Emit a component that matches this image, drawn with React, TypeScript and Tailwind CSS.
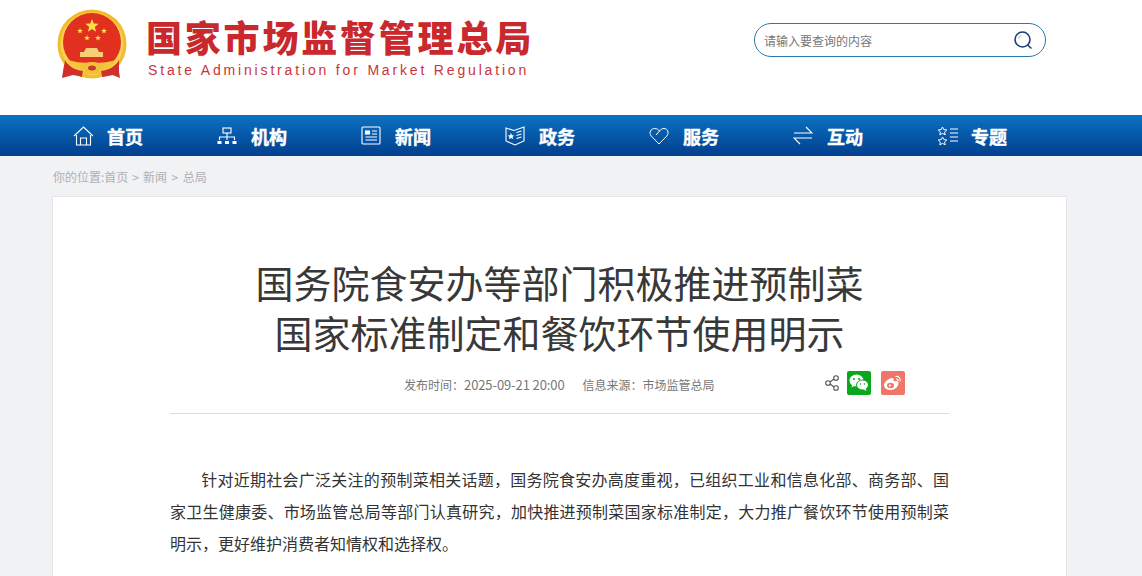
import React from "react";

const cjk = { fontFamily: '"Noto Sans CJK SC", "Liberation Sans", sans-serif' };

function Star({ x, y, r, fill = "#fde047" }: { x: number; y: number; r: number; fill?: string }) {
  const pts: string[] = [];
  for (let i = 0; i < 10; i++) {
    const a = -Math.PI / 2 + (i * Math.PI) / 5;
    const rr = i % 2 === 0 ? r : r * 0.42;
    pts.push(`${x + rr * Math.cos(a)},${y + rr * Math.sin(a)}`);
  }
  return <polygon points={pts.join(" ")} fill={fill} />;
}

function Emblem() {
  return (
    <svg width="72" height="76" viewBox="0 0 72 76" className="shrink-0">
      <path d="M8 50 L5 69 L16 66 L26 68 L36 62 L46 68 L56 66 L63 69 L60 50 L36 60Z" fill="#cf2c28" />
      <circle cx="35" cy="35" r="34.5" fill="#f2bd2c" />
      <circle cx="35" cy="35" r="31.5" fill="#f9d153" />
      <circle cx="35" cy="33" r="29" fill="#e1301f" />
      <Star x={35} y={17} r={7} />
      <Star x={23} y={22} r={3} />
      <Star x={47} y={22} r={3} />
      <Star x={30} y={29} r={3} />
      <Star x={41} y={29} r={3} />
      <path d="M29 39h11l2 4h4v5H23v-5h4z" fill="#f6cf77" />
      <path d="M10 50c5 3 15 4 25 4s20-1 25-4c-3 7-12 13-25 13S13 57 10 50z" fill="#f6c63a" />
      <path d="M8 51 L6 68 L17 65 L25 68 L26 62C18 61 11 57 8 51z" fill="#d1302a" />
      <path d="M62 51 L62 68 L53 65 L45 68 L44 62C52 61 59 57 62 51z" fill="#d1302a" />
      <path d="M22 59c4-5 9-6 13-6s9 1 13 6c-3 0-5 1-6 2l3 6c-3-1-7-2-10-2s-7 1-10 2l3-6c-1-1-3-2-6-2z" fill="#f3c03a" />
      <ellipse cx="35" cy="59" rx="4" ry="2.5" fill="#c83a28" />
    </svg>
  );
}

const stroke = { fill: "none", stroke: "#fff", strokeWidth: 1.1 };

const icons: React.ReactNode[] = [
  <svg key="h" width="21" height="20" viewBox="0 0 21 20" {...stroke}>
    <path d="M1 10 L10.500 1 L20 10" />
    <path d="M3.500 9v10h14V9" />
    <path d="M7.500 19v-7h6v7" />
  </svg>,
  <svg key="o" width="20" height="18" viewBox="0 0 20 18" {...stroke}>
    <rect x="6" y="1" width="8" height="5" />
    <path d="M10 6v4M2.500 13v-3h15v3M10 10v3" />
    <rect x="0.500" y="14" width="4" height="3" fill="#fff" stroke="none" />
    <rect x="8" y="14" width="4" height="3" fill="#fff" stroke="none" />
    <rect x="15.500" y="14" width="4" height="3" fill="#fff" stroke="none" />
  </svg>,
  <svg key="n" width="20" height="19" viewBox="0 0 20 19" {...stroke}>
    <rect x="1" y="1" width="18" height="17" rx="1" />
    <rect x="4.500" y="5" width="4" height="3" fill="#fff" />
    <path d="M11 5h5M11 8h5M4.500 11h11.500M4.500 14h11.500" />
  </svg>,
  <svg key="z" width="20" height="20" viewBox="0 0 20 20" {...stroke}>
    <path d="M1 2 L9 4.500 L19 1 V15 L10 19 L1 15Z" />
    <path d="M11.500 6.500l5-1.500M11.500 9.500l5-1.500M11.500 12.500l5-1.500" />
    <polygon points="6,7 7,9.300 9.300,9.500 7.500,11 8.100,13.300 6,12 3.900,13.300 4.500,11 2.700,9.500 5,9.300" fill="#fff" stroke="none" />
  </svg>,
  <svg key="f" width="20" height="18" viewBox="0 0 20 18" fill="none" stroke="#fff" strokeWidth="1">
    <path d="M10 17 L2.200 9 C-0.500 5.500 2 1.500 5.800 1.500 C8 1.500 9.500 2.500 10.500 4 L7 8" />
    <path d="M10.500 4 C11.500 2.500 13 1.500 15 1.500 C18.500 1.500 20.500 5.500 17.800 9 L10 17" />
  </svg>,
  <svg key="i" width="20" height="19" viewBox="0 0 20 19" {...stroke}>
    <path d="M1 7h18L13 1" />
    <path d="M19 12H1l6 6" />
  </svg>,
  <svg key="t" width="21" height="20" viewBox="0 0 21 20" fill="none" stroke="#fff" strokeWidth="1">
    <polygon points="5.500,1 6.800,3.600 9.800,4 7.600,6 8.200,8.800 5.500,7.400 2.800,8.800 3.400,6 1.200,4 4.200,3.600" />
    <polygon points="5.500,11 6.800,13.600 9.800,14 7.600,16 8.200,18.800 5.500,17.400 2.800,18.800 3.400,16 1.200,14 4.200,13.600" />
    <path d="M13 3h8M13 7h8M13 11h8M13 15h8" />
  </svg>,
];

const nav = ["首页", "机构", "新闻", "政务", "服务", "互动", "专题"];

export default function App() {
  return (
    <div className="h-[576px] w-[1142px] overflow-hidden bg-[#f1f2f4]" style={cjk}>
      <header className="flex h-[115px] items-start bg-white pl-[57px]">
        <div className="mt-[9px] flex w-[697px] items-start">
          <Emblem />
          <div className="ml-[18px] flex flex-col">
            <div className="mt-[3px] whitespace-nowrap text-[36px] font-black leading-[48px] tracking-[2.8px] text-[#c9282d] -ml-[1px]">
              国家市场监督管理总局
            </div>
            <div
              className="mt-[1px] whitespace-nowrap pl-[1px] text-[14px] leading-[18px] tracking-[2.83px] text-[#c9343a]"
              style={{ fontFamily: '"Liberation Sans", sans-serif' }}
            >
              State Administration for Market Regulation
            </div>
          </div>
        </div>
        <div className="mt-[23px] flex h-[34px] w-[292px] items-center justify-between rounded-[17px] border border-[#2b7ba6] pl-[10px] pr-[12px]">
          <span className="-ml-[1px] mt-[2px] text-[12px] text-[#777]">请输入要查询的内容</span>
          <svg width="20" height="20" viewBox="0 0 20 20" fill="none">
            <circle cx="9.500" cy="9.500" r="7.500" stroke="#1e3f73" strokeWidth="1.600" />
            <path d="M14.500 15l4 3.500" stroke="#1e3f73" strokeWidth="1.600" />
            <path d="M5.500 8.500a4.500 4.500 0 0 1 3-3" stroke="#9bb5d3" strokeWidth="1" />
          </svg>
        </div>
      </header>

      <nav className="flex h-[41px] items-center bg-gradient-to-b from-[#0e72c2] to-[#033f8e] pl-[73px]">
        {nav.map((label, i) => (
          <div key={label} className="flex w-[144px] items-center">
            <div className="flex w-[34px] shrink-0 items-center">{icons[i]}</div>
            <span className="text-[18px] font-bold leading-none text-white [-webkit-text-stroke:0.4px_white]">{label}</span>
          </div>
        ))}
      </nav>

      <div className="flex h-[41px] items-center pl-[53px] text-[12px] text-[#aeb0b5]">
        <span>你的位置:首页</span>
        <span className="mx-[4px]">&gt;</span>
        <span>新闻</span>
        <span className="mx-[4.5px]">&gt;</span>
        <span>总局</span>
      </div>

      <main className="-mt-[1px] ml-[52px] h-[400px] w-[1015px] border border-[#e4e5e8] bg-white px-[117px] pt-[60px]">
        <h1 className="text-center text-[38px] font-normal leading-[50px] text-[#383838]">
          国务院食安办等部门积极推进预制菜
          <br />
          国家标准制定和餐饮环节使用明示
        </h1>
        <div className="relative mt-[13px] flex h-[44px] items-start border-b border-[#dcdcdc] pl-[234px] pt-[5px] text-[12px] leading-[20px] text-[#777]">
          <span>发布时间：<span className="text-[13px] tracking-[-0.1px]">2025-09-21 20:00</span></span>
          <span className="ml-[18px]">信息来源：市场监管总局</span>
          <div className="absolute right-[44px] top-[1px] flex items-center">
            <svg width="14" height="16" viewBox="0 0 14 16" fill="none" stroke="#555" strokeWidth="1.100">
              <circle cx="3" cy="8" r="2.300" />
              <circle cx="11" cy="3" r="2.300" />
              <circle cx="11" cy="13" r="2.300" />
              <path d="M5 7l4-3M5 9l4 3" />
            </svg>
            <div className="ml-[8px] flex h-[24px] w-[24px] items-center justify-center rounded-[2px] bg-[#09a81c]">
              <svg width="20" height="18" viewBox="0 0 20 18" fill="#fff">
                <ellipse cx="7.500" cy="6.500" rx="7" ry="6" />
                <path d="M3.500 10.500l-1 3 3.500-2z" />
                <ellipse cx="13.500" cy="11" rx="6" ry="5" stroke="#09a81c" />
                <path d="M16.500 14.500l1 2.500-3-1.500z" />
                <circle cx="5" cy="5" r="1" fill="#09a81c" />
                <circle cx="10" cy="5" r="1" fill="#09a81c" />
                <circle cx="11.500" cy="10" r=".8" fill="#09a81c" />
                <circle cx="15.500" cy="10" r=".8" fill="#09a81c" />
              </svg>
            </div>
            <div className="ml-[10px] flex h-[24px] w-[24px] items-center justify-center rounded-[2px] bg-[#ef7767]">
              <svg width="20" height="18" viewBox="0 0 20 18" fill="none">
                <path d="M8 16c-4 0-7-2-7-5 0-3 5-7 8-7 2 0 2 2 1.500 3.500 2-1 5-1 5 1.500 0 4-4 7-7.500 7z" fill="#fff" />
                <ellipse cx="7.500" cy="11.500" rx="3.500" ry="2.800" fill="#ef7767" />
                <circle cx="7" cy="11.500" r="1.100" fill="#fff" />
                <path d="M12.500 2.500c3-.5 5.500 2 4.500 5M13 5c1.500-.2 2.500.8 2.200 2.200" stroke="#fff" strokeWidth="1.100" />
              </svg>
            </div>
          </div>
        </div>
        <p className="mt-[49px] text-justify text-[16px] leading-[32px] text-[#333]">
          <span className="inline-block w-[31px]" />
          针对近期社会广泛关注的预制菜相关话题，国务院食安办高度重视，已组织工业和信息化部、商务部、国家卫生健康委、市场监管总局等部门认真研究，加快推进预制菜国家标准制定，大力推广餐饮环节使用预制菜明示，更好维护消费者知情权和选择权。
        </p>
      </main>
    </div>
  );
}
